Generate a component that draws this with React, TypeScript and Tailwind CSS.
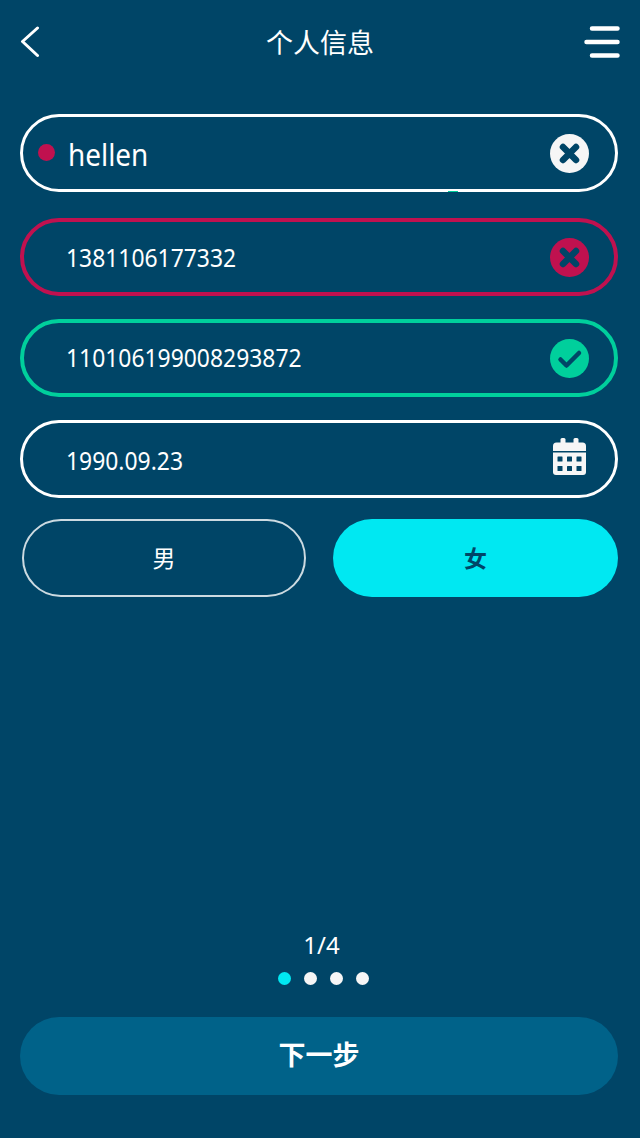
import type { ReactNode } from 'react'

const FONT = 'font-["Noto_Sans","Noto_Sans_CJK_SC",sans-serif]'

function ClearIcon({ color }: { color: string }) {
  return (
    <svg width="39" height="39" viewBox="0 0 39 39" className="shrink-0">
      <circle cx="19.5" cy="19.5" r="19.5" fill={color} />
      <path d="M13 13 L26 26 M26 13 L13 26" stroke="#004567" strokeWidth="6.5" strokeLinecap="round" />
    </svg>
  )
}

function CheckIcon() {
  return (
    <svg width="39" height="39" viewBox="0 0 39 39" className="shrink-0">
      <circle cx="19.5" cy="19.5" r="19.5" fill="#00cf9c" />
      <path d="M10.5 20.5 L16.5 26.5 L29 14" fill="none" stroke="#004567" strokeWidth="4.5" strokeLinecap="round" strokeLinejoin="round" />
    </svg>
  )
}

function CalendarIcon() {
  return (
    <svg width="33" height="38" viewBox="0 0 33 38" className="mb-[4px] shrink-0">
      <rect x="7.5" y="0" width="5" height="9" rx="1.5" fill="#f6f6f6" />
      <rect x="20.5" y="0" width="5" height="9" rx="1.5" fill="#f6f6f6" />
      <path d="M3.5 4.5 H29.5 A3.5 3.5 0 0 1 33 8 V13 H0 V8 A3.5 3.5 0 0 1 3.5 4.5 Z" fill="#f6f6f6" />
      <path d="M0 14.5 H33 V34 A3 3 0 0 1 30 37 H3 A3 3 0 0 1 0 34 Z" fill="#f6f6f6" />
      <g fill="#004567">
        <rect x="4.5" y="18.5" width="5" height="5" rx="0.5" />
        <rect x="14" y="18.5" width="5" height="5" rx="0.5" />
        <rect x="23.5" y="18.5" width="5" height="5" rx="0.5" />
        <rect x="4.5" y="28" width="5" height="5" rx="0.5" />
        <rect x="14" y="28" width="5" height="5" rx="0.5" />
        <rect x="23.5" y="28" width="5" height="5" rx="0.5" />
      </g>
    </svg>
  )
}

function Field({ border, text, icon, className, textClass }: { border: string; text: string; icon: ReactNode; className: string; textClass?: string }) {
  return (
    <div className={`flex h-[78px] items-center justify-between rounded-full ${border} ${className}`}>
      <span className={`inline-block origin-left scale-x-[.88] text-[26px] leading-none text-white ${textClass ?? ''}`}>{text}</span>
      {icon}
    </div>
  )
}

export default function App() {
  return (
    <div className={`flex min-h-[1138px] flex-col bg-[#004567] pl-[20px] pr-[22px] ${FONT}`}>
      {/* Header */}
      <header className="-mr-[2px] grid h-[84px] grid-cols-[1fr_auto_1fr] items-center">
        <svg width="20" height="32" viewBox="0 0 20 32">
          <path d="M17.5 2 L2.5 15.5 L17.5 29.5" fill="none" stroke="#fff" strokeWidth="3" strokeLinecap="round" strokeLinejoin="round" />
        </svg>
        <h1 className="text-[27px] leading-none text-white">个人信息</h1>
        <svg width="36" height="32" viewBox="0 0 36 32" className="justify-self-end">
          <path d="M8 2.5 H33.5 M2.5 16 H33.5 M8 29.5 H33.5" stroke="#fff" strokeWidth="4.5" strokeLinecap="round" />
        </svg>
      </header>

      {/* Form */}
      <div className="relative mt-[30px] flex h-[78px] items-center justify-between rounded-full border-[3px] border-white pl-[15px] pr-[26px]">
        <div className="flex items-center">
          <span className="mb-[2px] h-[17px] w-[17px] rounded-full bg-[#c0114f]" />
          <span className="ml-[13px] mt-[4px] inline-block origin-left scale-x-[.93] text-[30px] leading-none text-white">hellen</span>
        </div>
        <ClearIcon color="#f6f6f6" />
        <span className="absolute bottom-[-3px] left-[425px] h-[1px] w-[10px] bg-[#00cf9c]" />
      </div>
      <Field border="border-4 border-[#c0114f] pl-[42px] pr-[25px]" text="1381106177332" icon={<ClearIcon color="#c0114f" />} className="mt-[26px]" />
      <Field border="border-4 border-[#00cf9c] pl-[42px] pr-[25px]" text="110106199008293872" icon={<CheckIcon />} className="mt-[23px]" textClass="mb-[2px]" />
      <Field border="border-[3px] border-white pl-[43px] pr-[29px]" text="1990.09.23" icon={<CalendarIcon />} className="mt-[23px]" textClass="mt-[2px] scale-x-[.86]" />

      <div className="mt-[21px] flex items-stretch gap-[27px] pl-[2px]">
        <button className="flex h-[78px] w-[284px] items-center justify-center rounded-full border-2 border-white/80 text-[23px] text-white">男</button>
        <button className="flex h-[78px] flex-1 items-center justify-center rounded-full bg-[#00e8f2] text-[23px] font-bold text-[#004567]">女</button>
      </div>

      {/* Pager and next */}
      <div className="mt-auto flex flex-col items-center pb-[43px]">
        <span className="ml-[5px] text-[24px] leading-none text-white">1/4</span>
        <div className="ml-[9px] mt-[15px] flex items-center gap-[13px]">
          <span className="h-[13px] w-[13px] rounded-full bg-[#00e8f2]" />
          <span className="h-[13px] w-[13px] rounded-full bg-[#f6f6f6]" />
          <span className="h-[13px] w-[13px] rounded-full bg-[#f6f6f6]" />
          <span className="h-[13px] w-[13px] rounded-full bg-[#f6f6f6]" />
        </div>
        <button className="mt-[32px] flex h-[78px] w-full items-center justify-center rounded-full bg-[#006289] pb-[2px] text-[27px] font-bold text-white">下一步</button>
      </div>
    </div>
  )
}
